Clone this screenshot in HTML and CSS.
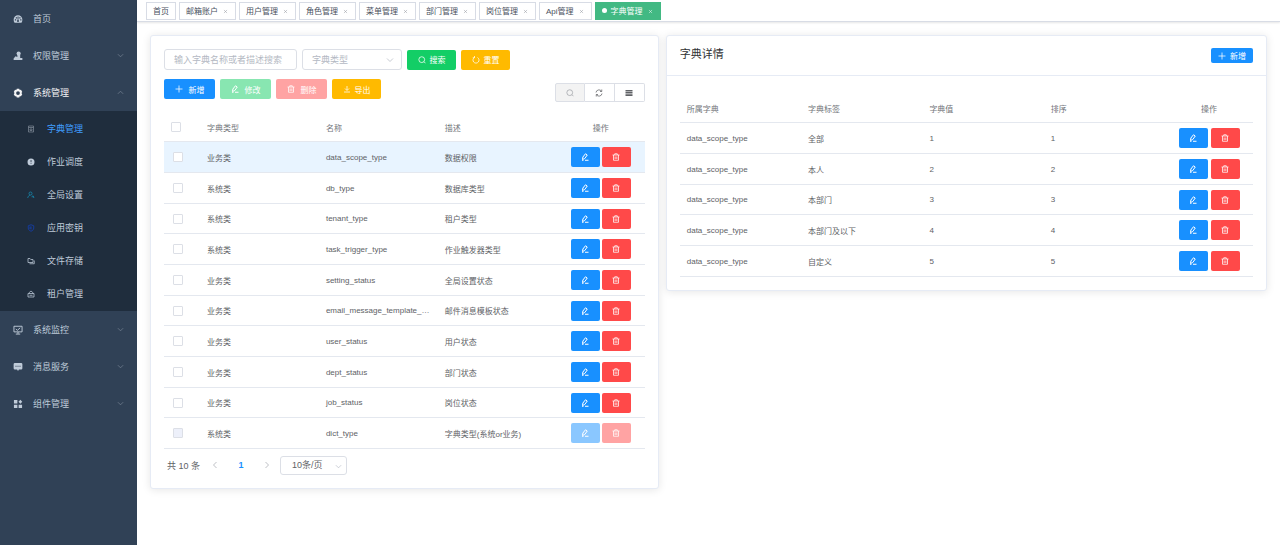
FILE: index.html
```html
<!DOCTYPE html>
<html lang="zh-CN">
<head>
    <meta charset="UTF-8">
    <meta name="viewport" content="width=device-width, initial-scale=1.0">
    <title>字典管理</title>
    <link rel="stylesheet" href="styles.css">
</head>
<body>

<!-- icon sprite -->
<svg class="sprite" aria-hidden="true">
    <symbol id="i-dash" viewBox="0 0 16 16"><path fill="currentColor" fill-rule="evenodd" d="M8 2a7 7 0 0 0-7 7c0 2 .6 3.600 1.500 5h11c.9-1.400 1.500-3 1.500-5a7 7 0 0 0-7-7zM3 8.500h2v2H3zM4.500 5h2v2h-2zM7.300 4h1.600l-.3 5.500a1.600 1.600 0 1 1-1.200 0zM10 5h2v2h-2zM11.500 8.500h2v2h-2z"/></symbol>
    <symbol id="i-auth" viewBox="0 0 16 16"><circle cx="9" cy="4" r="3.300" fill="currentColor"/><path fill="currentColor" d="M7 6h4.500v5H15v3.500H1V12l3-3.500 3 1z"/></symbol>
    <symbol id="i-gear" viewBox="0 0 16 16"><path fill="currentColor" fill-rule="evenodd" d="M6 1h4l.7 2 2.100-.3 2 3.500L13.500 8l1.300 1.800-2 3.500-2.100-.3-.7 2H6l-.7-2-2.100.3-2-3.500L2.500 8 1.200 6.200l2-3.500 2.100.3zM8 5a3 3 0 1 0 0 6 3 3 0 0 0 0-6z"/></symbol>
    <symbol id="i-dict" viewBox="0 0 16 16"><path class="line" d="M3 2h10v12H3zM3 5h10M6 8h4v3H6z"/></symbol>
    <symbol id="i-clock" viewBox="0 0 16 16"><path fill="currentColor" fill-rule="evenodd" d="M8 1a7 7 0 1 0 0 14A7 7 0 0 0 8 1zM7.300 4h1.500v4.500H7.300zM7.300 10h1.500v1.500H7.300z"/></symbol>
    <symbol id="i-user" viewBox="0 0 16 16"><path class="line" d="M7 2a3 3 0 1 1 0 6 3 3 0 0 1 0-6zM1.500 14c0-3 2-5 5-5.500M9 11.500h5M11.500 9l2.500 5"/></symbol>
    <symbol id="i-key" viewBox="0 0 16 16"><path class="line" d="M8 1.500l5.500 2V8c0 3-2 5-5.500 6.500C4.500 13 2.500 11 2.500 8V3.500zM8 5v6M6 5v5"/></symbol>
    <symbol id="i-file" viewBox="0 0 16 16"><path class="line" d="M2 11V3h4l1.500 2H12v6zM5 13.500h9.500V7"/></symbol>
    <symbol id="i-tenant" viewBox="0 0 16 16"><path class="line" d="M2 7h12v7H2zM4.500 7V5L8 2l3.500 3v2M5 10.500h6"/></symbol>
    <symbol id="i-monitor" viewBox="0 0 16 16"><path class="line" d="M1.500 2h13v9h-13zM8 11v3M4.500 14.500h7M4.500 6.500l2.500 2 4.500-4"/></symbol>
    <symbol id="i-msg" viewBox="0 0 16 16"><path fill="currentColor" fill-rule="evenodd" d="M3 1.500h10a2 2 0 0 1 2 2V10a2 2 0 0 1-2 2H9.500L8 14.500 6.500 12H3a2 2 0 0 1-2-2V3.500a2 2 0 0 1 2-2zM4 6v1.600h1.600V6zM7.200 6v1.600h1.600V6zM10.400 6v1.600H12V6z"/></symbol>
    <symbol id="i-grid" viewBox="0 0 16 16"><path fill="currentColor" d="M1.500 1.500H7V7H1.500zM1.500 9H7v5.500H1.500zM9 9h5.500v5.500H9zM11.800 1l3 3.200-3 3.200-3-3.200z"/></symbol>
    <symbol id="i-down" viewBox="0 0 16 16"><path class="line" d="M2 5l6 6 6-6"/></symbol>
    <symbol id="i-up" viewBox="0 0 16 16"><path class="line" d="M2 11l6-6 6 6"/></symbol>
    <symbol id="i-left" viewBox="0 0 16 16"><path class="line" d="M11 2L5 8l6 6"/></symbol>
    <symbol id="i-right" viewBox="0 0 16 16"><path class="line" d="M5 2l6 6-6 6"/></symbol>
    <symbol id="i-close" viewBox="0 0 16 16"><path class="line" d="M3 3l10 10M13 3L3 13"/></symbol>
    <symbol id="i-search" viewBox="0 0 16 16"><path class="line" d="M7.500 1.500a5.800 5.800 0 1 1 0 11.600 5.800 5.800 0 0 1 0-11.600zM12 11.500l3 3"/></symbol>
    <symbol id="i-reset" viewBox="0 0 16 16"><path class="line" d="M5 3a6 6 0 1 0 6 0M5 0v3.500H1.500"/></symbol>
    <symbol id="i-refresh" viewBox="0 0 16 16"><path class="line" d="M2 7a6 6 0 0 1 11-2.500M14 9a6 6 0 0 1-11 2.500M13.500 1v4H10M2.500 15v-4H6"/></symbol>
    <symbol id="i-plus" viewBox="0 0 16 16"><path class="line" d="M8 1v14M1 8h14"/></symbol>
    <symbol id="i-edit" viewBox="0 0 16 16"><path class="line bold" d="M3 13l.8-5L9 1.500l3.500 2.500L7.500 11zM8 14.500h7M2 14.500h3"/></symbol>
    <symbol id="i-trash" viewBox="0 0 16 16"><path class="line" d="M1 4h14M5.500 4V1.500h5V4M3 4v10.500h10V4M6.300 7v5M9.700 7v5"/></symbol>
    <symbol id="i-export" viewBox="0 0 16 16"><path class="line" d="M8 2v8M4 7l4 4 4-4M2 14h12"/></symbol>
    <symbol id="i-cols" viewBox="0 0 16 16"><path fill="currentColor" d="M1 2h14v3H1zM1 6.200h14v3H1zM1 10.400h14v3.600H1z"/></symbol>
</svg>

<div class="app">
    <nav class="sidebar">
        <a class="menu-item" href="#"><svg class="icon"><use href="#i-dash"/></svg><span>首页</span></a>
        <a class="menu-item" href="#"><svg class="icon"><use href="#i-auth"/></svg><span>权限管理</span><svg class="arrow"><use href="#i-down"/></svg></a>
        <a class="menu-item open" href="#"><svg class="icon"><use href="#i-gear"/></svg><span>系统管理</span><svg class="arrow"><use href="#i-up"/></svg></a>
        <div class="submenu">
            <a class="sub-item active" href="#"><svg class="icon dim"><use href="#i-dict"/></svg><span>字典管理</span></a>
            <a class="sub-item" href="#"><svg class="icon"><use href="#i-clock"/></svg><span>作业调度</span></a>
            <a class="sub-item" href="#"><svg class="icon teal"><use href="#i-user"/></svg><span>全局设置</span></a>
            <a class="sub-item" href="#"><svg class="icon blue"><use href="#i-key"/></svg><span>应用密钥</span></a>
            <a class="sub-item" href="#"><svg class="icon"><use href="#i-file"/></svg><span>文件存储</span></a>
            <a class="sub-item" href="#"><svg class="icon"><use href="#i-tenant"/></svg><span>租户管理</span></a>
        </div>
        <a class="menu-item" href="#"><svg class="icon"><use href="#i-monitor"/></svg><span>系统监控</span><svg class="arrow"><use href="#i-down"/></svg></a>
        <a class="menu-item" href="#"><svg class="icon"><use href="#i-msg"/></svg><span>消息服务</span><svg class="arrow"><use href="#i-down"/></svg></a>
        <a class="menu-item" href="#"><svg class="icon"><use href="#i-grid"/></svg><span>组件管理</span><svg class="arrow"><use href="#i-down"/></svg></a>
    </nav>

    <div class="main">
        <div class="tabs">
            <a class="tab" href="#">首页</a>
            <a class="tab" href="#">邮箱账户<svg class="close"><use href="#i-close"/></svg></a>
            <a class="tab" href="#">用户管理<svg class="close"><use href="#i-close"/></svg></a>
            <a class="tab" href="#">角色管理<svg class="close"><use href="#i-close"/></svg></a>
            <a class="tab" href="#">菜单管理<svg class="close"><use href="#i-close"/></svg></a>
            <a class="tab" href="#">部门管理<svg class="close"><use href="#i-close"/></svg></a>
            <a class="tab" href="#">岗位管理<svg class="close"><use href="#i-close"/></svg></a>
            <a class="tab" href="#">Api管理<svg class="close"><use href="#i-close"/></svg></a>
            <a class="tab active" href="#">字典管理<svg class="close"><use href="#i-close"/></svg></a>
        </div>

        <div class="content">
            <section class="card list-card">
                <form class="filters">
                    <input class="field" type="text" placeholder="输入字典名称或者描述搜索" aria-label="输入字典名称或者描述搜索">
                    <span class="select-wrap">
                        <select class="field empty" aria-label="字典类型"><option>字典类型</option></select>
                        <svg class="caret"><use href="#i-down"/></svg>
                    </span>
                    <button type="button" class="btn success"><svg><use href="#i-search"/></svg>搜索</button>
                    <button type="button" class="btn warning"><svg><use href="#i-reset"/></svg>重置</button>
                </form>
                <div class="toolbar">
                    <button type="button" class="btn wide primary"><svg><use href="#i-plus"/></svg>新增</button>
                    <button type="button" class="btn wide success" disabled><svg><use href="#i-edit"/></svg>修改</button>
                    <button type="button" class="btn wide danger" disabled><svg><use href="#i-trash"/></svg>删除</button>
                    <button type="button" class="btn warning"><svg><use href="#i-export"/></svg>导出</button>
                    <div class="tools">
                        <button type="button" class="on" aria-label="搜索"><svg><use href="#i-search"/></svg></button>
                        <button type="button" aria-label="刷新"><svg><use href="#i-refresh"/></svg></button>
                        <button type="button" aria-label="列"><svg><use href="#i-cols"/></svg></button>
                    </div>
                </div>

                <table class="list">
                    <colgroup><col class="c-check"><col><col><col><col class="c-op"></colgroup>
                    <thead>
                        <tr><th><input type="checkbox" aria-label="全选"></th><th>字典类型</th><th>名称</th><th>描述</th><th class="op">操作</th></tr>
                    </thead>
                    <tbody id="dictRows"></tbody>
                </table>

                <div class="pager">
                    <span>共 10 条</span>
                    <button type="button" class="page" aria-label="上一页" disabled><svg><use href="#i-left"/></svg></button>
                    <button type="button" class="page current">1</button>
                    <button type="button" class="page" aria-label="下一页" disabled><svg><use href="#i-right"/></svg></button>
                    <span class="select-wrap size">
                        <select class="field" aria-label="每页条数"><option>10条/页</option></select>
                        <svg class="caret"><use href="#i-down"/></svg>
                    </span>
                </div>
            </section>

            <section class="card">
                <header class="card-head">
                    <h2>字典详情</h2>
                    <button type="button" class="btn mini primary"><svg><use href="#i-plus"/></svg>新增</button>
                </header>
                <div class="card-body">
                    <table class="detail">
                        <colgroup><col><col><col><col><col class="c-op"></colgroup>
                        <thead>
                            <tr><th>所属字典</th><th>字典标签</th><th>字典值</th><th>排序</th><th class="op">操作</th></tr>
                        </thead>
                        <tbody id="detailRows"></tbody>
                    </table>
                </div>
            </section>
        </div>
    </div>
</div>

<script>
    const dicts = [
        ['业务类', 'data_scope_type', '数据权限'],
        ['系统类', 'db_type', '数据库类型'],
        ['系统类', 'tenant_type', '租户类型'],
        ['系统类', 'task_trigger_type', '作业触发器类型'],
        ['业务类', 'setting_status', '全局设置状态'],
        ['业务类', 'email_message_template_status', '邮件消息模板状态'],
        ['业务类', 'user_status', '用户状态'],
        ['业务类', 'dept_status', '部门状态'],
        ['业务类', 'job_status', '岗位状态'],
        ['系统类', 'dict_type', '字典类型(系统or业务)']
    ];
    const details = ['全部', '本人', '本部门', '本部门及以下', '自定义'];

    function actions(disabled) {
        return `<td class="op"><div class="actions">
            <button type="button" class="btn act primary" aria-label="修改" ${disabled}><svg><use href="#i-edit"/></svg></button>
            <button type="button" class="btn act danger" aria-label="删除" ${disabled}><svg><use href="#i-trash"/></svg></button>
        </div></td>`;
    }

    document.getElementById('dictRows').innerHTML = dicts.map((d, i) => {
        // dict_type is built in and can't be edited
        const disabled = d[1] === 'dict_type' ? 'disabled' : '';
        return `<tr class="${i === 0 ? 'selected' : ''}">
            <td><input type="checkbox" aria-label="${d[1]}" ${disabled}></td>
            <td>${d[0]}</td><td>${d[1]}</td><td>${d[2]}</td>${actions(disabled)}</tr>`;
    }).join('');

    document.getElementById('detailRows').innerHTML = details.map((label, i) =>
        `<tr><td>data_scope_type</td><td>${label}</td><td>${i + 1}</td><td>${i + 1}</td>${actions('')}</tr>`
    ).join('');
</script>

</body>
</html>
```
FILE: styles.css
```css
* { box-sizing: border-box; }
body { margin: 0; font-family: "Liberation Sans", "Noto Sans CJK SC", sans-serif; font-size: 8px; color: #606266; background: #fff; }
a { text-decoration: none; color: inherit; }
button, input, select { font-family: inherit; margin: 0; }
svg { width: 8px; height: 8px; flex: none; }
.line { fill: none; stroke: currentColor; stroke-width: 1.5; }
.line.bold { stroke-width: 2; }
.sprite { position: absolute; width: 0; height: 0; }
.app { display: flex; min-height: 100vh; }

/* sidebar */
.sidebar { flex: none; width: 137px; background: #304156; color: #bfcbd9; font-size: 9px; }
.menu-item { display: flex; align-items: center; height: 37px; padding: 0 13px; }
.menu-item .icon { width: 10px; height: 10px; margin-right: 10px; }
.menu-item .arrow { width: 7px; height: 7px; margin-left: auto; color: #7d8a9a; }
.menu-item.open { color: #f4f4f5; }
.submenu { background: #1f2d3d; padding: 1px 0; }
.sub-item { display: flex; align-items: center; height: 33px; padding-left: 27px; }
.sub-item .icon { margin-right: 12px; }
.sub-item.active { color: #409eff; }
.icon.dim { color: #7c8794; }
.icon.teal { color: #1789b0; }
.icon.blue { color: #1440b8; }

/* tabs */
.main { flex: 1; min-width: 0; }
.tabs { display: flex; gap: 3px; height: 22px; padding: 2px 9px; border-bottom: 1px solid #d8dce5; box-shadow: 0 1px 2px rgba(0, 0, 0, .1); }
.tab { display: flex; align-items: center; height: 18px; padding: 0 6px 1px; border: 1px solid #d8dce5; color: #495060; }
.tab .close { width: 5px; height: 5px; margin: 1px 1px 0 5px; color: #8d929b; }
.tab.active { background: #42b983; border-color: #42b983; color: #fff; }
.tab.active::before { content: ""; width: 5px; height: 5px; margin-right: 4px; border-radius: 50%; background: #fff; }
.tab.active .close { color: #fff; }

/* cards */
.content { display: grid; grid-template-columns: 11fr 13fr; align-items: start; gap: 7px; padding: 13px; }
.card { min-width: 0; border: 1px solid #e6ebf5; border-radius: 3px; background: #fff; box-shadow: 0 1px 8px rgba(0, 0, 0, .1); }
.list-card { padding: 13px; }
.card-head { display: flex; align-items: center; justify-content: space-between; height: 40px; padding: 0 13px; border-bottom: 1px solid #e6ebf5; }
.card-head h2 { margin: 0; padding-bottom: 5px; font-size: 11px; font-weight: normal; color: #303133; }
.card-body { padding: 18px 13px 13px; }

/* controls */
.filters { display: flex; align-items: center; gap: 5px; }
.field { appearance: none; width: 133px; height: 21px; padding: 0 9px; border: 1px solid #dcdfe6; border-radius: 3px; background: #fff; color: #606266; font-size: 9px; outline: none; }
.field::placeholder { color: #b4b9c3; }
.field.empty { color: #b4b9c3; }
.select-wrap { position: relative; display: inline-flex; width: 100px; }
.select-wrap .field { width: 100%; }
.caret { position: absolute; right: 8px; top: 7px; color: #b4b9c3; }
.btn { display: inline-flex; align-items: center; justify-content: center; gap: 4px; width: 49px; height: 20px; padding: 0; border: 0; border-radius: 2px; color: #fff; font-size: 8px; cursor: pointer; }
.btn.wide { width: 51px; gap: 6px; }
.btn.mini { width: 42px; height: 15px; }
.btn.act { width: 29px; }
.btn:disabled { opacity: .5; }
.primary { background: #1890ff; }
.success { background: #13ce66; }
.warning { background: #ffba00; }
.danger { background: #ff4949; }
.toolbar { display: flex; gap: 5px; margin-top: 9px; }
.tools { display: flex; margin: 4px 0 0 auto; }
.tools button { display: flex; align-items: center; justify-content: center; width: 30px; height: 19px; padding: 0; border: 1px solid #dcdfe6; border-left: 0; background: #fff; color: #606266; }
.tools button:first-child { border-left: 1px solid #dcdfe6; border-radius: 2px 0 0 2px; }
.tools button:last-child { border-radius: 0 2px 2px 0; }
.tools .on { background: #f3f3f3; color: #a0a3a8; }

/* tables */
table { width: 100%; table-layout: fixed; border-collapse: separate; border-spacing: 0; }
.list { margin-top: 11px; }
.c-check { width: 36px; }
.c-op { width: 88px; }
th, td { padding: 0 7px; border-bottom: 1px solid #e4e8ef; text-align: left; font-weight: normal; white-space: nowrap; overflow: hidden; text-overflow: ellipsis; }
th { height: 29px; color: #72757a; }
td { height: 31px; }
tr:nth-child(3n) td { height: 30px; }
th.op, td.op { text-align: center; }
.actions { display: flex; justify-content: center; gap: 3px; }
.list .actions { gap: 2px; }
.selected td { background: #e8f4ff; }
td:first-child input { margin-left: 2px; }
input[type="checkbox"] { appearance: none; display: block; width: 10px; height: 10px; border: 1px solid #dcdfe6; border-radius: 1px; background: #fff; }
input[type="checkbox"]:disabled { background: #edf0fa; }

/* pager */
.pager { display: flex; align-items: center; margin-top: 6px; padding-left: 3px; font-size: 9px; }
.page { display: flex; align-items: center; justify-content: center; width: 26px; height: 20px; padding: 0; border: 0; background: none; color: #a8abb2; font-size: 9px; }
.pager span + .page { margin-left: 2px; }
.page.current { color: #1890ff; font-weight: bold; }
.pager .size { width: 67px; }
.pager .size .field { height: 19px; padding-left: 11px; }
.pager .size .caret { right: 5px; width: 7px; height: 7px; }
```
